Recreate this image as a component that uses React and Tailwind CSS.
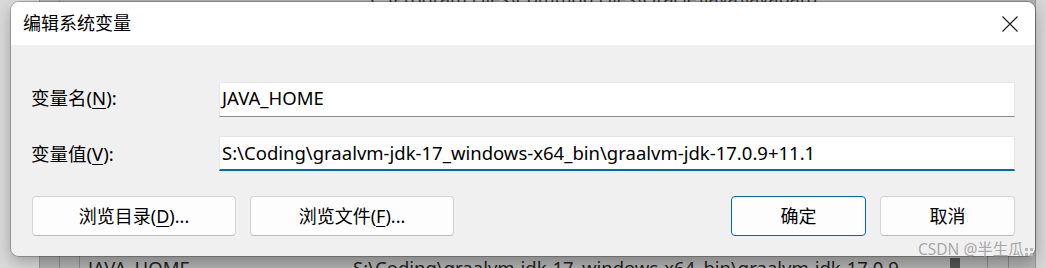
import React from "react";

const FONT = { fontFamily: '"Noto Sans", "Noto Sans CJK SC", sans-serif' };

function U({ children }) {
  return <span className="underline underline-offset-[3px] decoration-[1px]">{children}</span>;
}

function Btn({ children, primary, className = "" }) {
  return (
    <button
      className={
        "h-[40px] rounded-[4px] flex items-center justify-center text-[18px] text-black " +
        (primary
          ? "bg-[#fdfdfd] border border-[#0067c0]"
          : "bg-[#fdfdfd] border border-[#d4d4d4] border-b-[#bcbcbc]") +
        " " +
        className
      }
    >
      {children}
    </button>
  );
}

export default function App() {
  return (
    <div className="relative w-[1045px] h-[268px] overflow-hidden bg-[#b2b2b2]" style={FONT}>
      {/* window behind (dimmed) */}
      <div className="absolute inset-0 flex">
        <div className="w-[40px] h-full bg-[#dadada] border-r border-[#9a9a9a]" />
        <div className="flex-1 flex flex-col">
          <div className="h-[256px] flex">
            <div className="w-[20px] border-r border-[#9a9a9a]" />
            <div className="flex-1 relative">
              <div className="absolute left-[310px] top-[-15px] text-[18px] text-[#333] whitespace-nowrap">
                C:\Program Files\Common Files\Oracle\Java\javapath
              </div>
            </div>
          </div>
          <div className="flex-1 flex">
            <div className="w-[20px] border-r border-[#8c8c8c]" />
            <div className="w-[20px] border-r border-[#8c8c8c]" />
            <div className="flex-1 relative">
              <div className="absolute left-[8px] top-[3px] text-[18.5px] leading-none text-[#222] whitespace-nowrap">
                JAVA_HOME
              </div>
              <div className="absolute left-[273px] top-[3px] text-[18.5px] leading-none text-[#222] whitespace-nowrap">
                S:\Coding\graalvm-jdk-17_windows-x64_bin\graalvm-jdk-17.0.9
              </div>
              <div className="absolute left-[870px] top-[2px] w-[10px] h-[12px] bg-[#555]" />
              <div className="absolute left-[907px] top-0 w-px h-[12px] bg-[#888]" />
              <div className="absolute left-[928px] top-0 w-px h-[12px] bg-[#888]" />
            </div>
          </div>
        </div>
        <div className="w-[10px] h-full bg-[#d6d6d6] border-l border-[#9a9a9a]" />
      </div>

      {/* dialog */}
      <div className="relative pl-[11px] pt-[2px]">
        <div className="w-[1024px] h-[254px] rounded-[8px] overflow-hidden flex flex-col shadow-[0_0_0_1px_rgba(0,0,0,0.22),0_6px_16px_rgba(0,0,0,0.28)]">
          <div className="h-[43px] bg-white flex items-center justify-between">
            <div className="pl-[12px] text-[18px] text-black">编辑系统变量</div>
            <div className="w-[50px] h-full flex items-center justify-center">
              <svg width="16" height="16" viewBox="0 0 16 16">
                <path d="M0.5 0.5 L15.5 15.5 M15.5 0.5 L0.5 15.5" stroke="#1a1a1a" strokeWidth="1.1" fill="none" />
              </svg>
            </div>
          </div>
          <div className="flex-1 bg-[#f0f0f0] px-[20px] pt-[37px] pb-[20px] flex flex-col">
            <div className="grid grid-cols-[188px_1fr] gap-y-[19px]">
              <div className="flex items-center text-[18.5px] text-black pb-[3px]">
                变量名(<U>N</U>):
              </div>
              <div className="h-[35px] bg-white border border-[#e6e6e6] border-b-[#878787] pl-[2px] pb-[4px] flex items-center text-[18.5px] text-black">
                JAVA_HOME
              </div>
              <div className="flex items-center text-[18.5px] text-black">
                变量值(<U>V</U>):
              </div>
              <div className="h-[35px] bg-white border border-[#e6e6e6] border-b-[2px] border-b-[#0067c0] pl-[2px] flex items-center text-[18.5px] text-black whitespace-nowrap">
                S:\Coding\graalvm-jdk-17_windows-x64_bin\graalvm-jdk-17.0.9+11.1
              </div>
            </div>
            <div className="mt-[25px] flex justify-between">
              <div className="flex gap-[14px] pl-[1px]">
                <Btn className="w-[204px]">
                  浏览目录(<U>D</U>)...
                </Btn>
                <Btn className="w-[204px]">
                  浏览文件(<U>F</U>)...
                </Btn>
              </div>
              <div className="flex gap-[14px]">
                <Btn primary className="w-[135px]">确定</Btn>
                <Btn className="w-[135px]">取消</Btn>
              </div>
            </div>
          </div>
        </div>
      </div>

      {/* watermark */}
      <div className="absolute left-[918px] top-[238px] text-[15.5px] text-[#a9a9a9] whitespace-nowrap flex items-center gap-[1px]">
        CSDN @半生瓜
        <svg width="8" height="8" viewBox="0 0 8 8" className="mt-[4px]">
          <rect x="0" y="0" width="3" height="3" fill="#b8b8b8" />
          <rect x="5" y="0" width="3" height="3" fill="#b8b8b8" />
          <rect x="0" y="5" width="3" height="3" fill="#b8b8b8" />
          <rect x="5" y="5" width="3" height="3" fill="#b8b8b8" />
        </svg>
      </div>
    </div>
  );
}
